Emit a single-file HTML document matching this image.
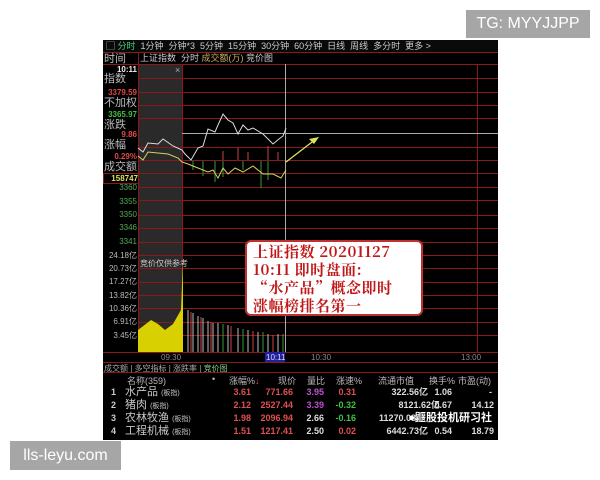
<!DOCTYPE html>
<html><head><meta charset="utf-8"><style>
body{margin:0;width:600px;height:480px;background:#fff;position:relative;overflow:hidden;font-family:"Liberation Sans","Noto Sans CJK SC",sans-serif}
.a{position:absolute;white-space:nowrap}
#p{position:absolute;left:103px;top:40px;width:395px;height:400px;background:#000;overflow:hidden}
.t{font-size:9px;line-height:10px}
.l{font-size:11px;color:#bbb;line-height:12px;left:1px}
.n{font-size:8px;left:0;text-align:right;width:34px;line-height:9px;font-weight:bold}
.c{font-size:11px;color:#c8c8c8}
</style></head><body>
<div class="a" style="left:466px;top:10px;width:124px;height:28px;background:#a6a6a6;color:#fff;font-size:16px;line-height:28px;text-align:center">TG: MYYJJPP</div>
<div class="a" style="left:10px;top:441px;width:111px;height:29px;background:#a6a6a6;color:#fff;font-size:16px;line-height:29px;text-align:center">lls-leyu.com</div>
<div id="p">
<svg width="395" height="400" style="position:absolute;left:0;top:0">
<rect x="0" y="0" width="395" height="12" fill="#0a0a0a"/>
<rect x="35" y="24" width="44" height="288" fill="#2a2a2a"/>
<g stroke="#8a1a1a" stroke-width="1">
<line x1="0" y1="12.5" x2="395" y2="12.5"/><line x1="35.5" y1="12" x2="35.5" y2="312"/><line x1="79.5" y1="24" x2="79.5" y2="312"/>
<line x1="374.5" y1="24" x2="374.5" y2="312"/><line x1="0" y1="24.5" x2="395" y2="24.5"/>
<line x1="35" y1="38.5" x2="395" y2="38.5"/><line x1="35" y1="52.5" x2="395" y2="52.5"/><line x1="35" y1="65.5" x2="395" y2="65.5"/><line x1="35" y1="78.5" x2="395" y2="78.5"/><line x1="35" y1="107.5" x2="395" y2="107.5"/><line x1="35" y1="120.5" x2="395" y2="120.5"/><line x1="35" y1="133.5" x2="395" y2="133.5"/><line x1="35" y1="147.5" x2="395" y2="147.5"/><line x1="35" y1="160.5" x2="395" y2="160.5"/><line x1="35" y1="175.5" x2="395" y2="175.5"/><line x1="35" y1="188.5" x2="395" y2="188.5"/><line x1="35" y1="202.5" x2="395" y2="202.5"/><line x1="35" y1="215.5" x2="395" y2="215.5"/><line x1="35" y1="228.5" x2="395" y2="228.5"/><line x1="35" y1="242.5" x2="395" y2="242.5"/><line x1="35" y1="255.5" x2="395" y2="255.5"/><line x1="35" y1="268.5" x2="395" y2="268.5"/><line x1="35" y1="282.5" x2="395" y2="282.5"/><line x1="35" y1="295.5" x2="395" y2="295.5"/>
<line x1="0" y1="312.5" x2="395" y2="312.5"/><line x1="0" y1="322.5" x2="395" y2="322.5"/><line x1="0" y1="332.5" x2="395" y2="332.5"/>
</g>
<line x1="79" y1="93.5" x2="395" y2="93.5" stroke="#aaa"/>
<line x1="182.5" y1="24" x2="182.5" y2="312" stroke="#aaa"/>
<g stroke="#d04040"><line x1="120" y1="120" x2="120" y2="111"/><line x1="135" y1="120" x2="135" y2="108"/><line x1="145" y1="120" x2="145" y2="112"/><line x1="165" y1="120" x2="165" y2="106"/><line x1="175" y1="120" x2="175" y2="112"/></g>
<g stroke="#3a9a3a"><line x1="90" y1="121" x2="90" y2="130"/><line x1="100" y1="121" x2="100" y2="136"/><line x1="112" y1="121" x2="112" y2="142"/><line x1="120" y1="121" x2="120" y2="137"/><line x1="140" y1="121" x2="140" y2="130"/><line x1="158" y1="121" x2="158" y2="148"/><line x1="165" y1="121" x2="165" y2="140"/></g>
<polyline fill="none" stroke="#ddd" points="35,108 40,112 45,103 55,104 60,99 70,106 79,110 82,114 88,120 95,108 100,106 105,89 112,92 115,85 120,74 125,80 130,83 135,94 140,85 145,90 150,88 160,94 170,104 176,99 180,96 183,88"/>
<polyline fill="none" stroke="#d8d060" points="35,116 40,120 45,112 55,113 65,114 75,118 79,122 85,124 95,128 105,132 110,130 115,138 120,128 125,134 132,128 140,132 150,126 160,134 170,134 178,138 183,130"/>
<line x1="183" y1="122" x2="213" y2="99" stroke="#e0e060" stroke-width="1.3"/>
<polygon points="216,97 206,99 211,104" fill="#e0e060"/>
<polygon fill="#d8d000" points="35,312 35,290 48,280 55,284 62,290 70,284 78,270 80,220 80,312"/>
<g stroke="#bbb" stroke-width="1">
<line x1="85" y1="312" x2="85" y2="270"/><line x1="90" y1="312" x2="90" y2="273"/><line x1="95" y1="312" x2="95" y2="276"/><line x1="100" y1="312" x2="100" y2="278"/><line x1="105" y1="312" x2="105" y2="281"/><line x1="110" y1="312" x2="110" y2="283"/><line x1="115" y1="312" x2="115" y2="283"/><line x1="125" y1="312" x2="125" y2="285"/><line x1="135" y1="312" x2="135" y2="288"/><line x1="145" y1="312" x2="145" y2="290"/><line x1="155" y1="312" x2="155" y2="292"/><line x1="165" y1="312" x2="165" y2="294"/><line x1="175" y1="312" x2="175" y2="294"/>
</g>
<g stroke="#c44" stroke-width="1"><line x1="88" y1="312" x2="88" y2="272"/><line x1="98" y1="312" x2="98" y2="277"/><line x1="108" y1="312" x2="108" y2="282"/><line x1="128" y1="312" x2="128" y2="286"/><line x1="150" y1="312" x2="150" y2="291"/><line x1="170" y1="312" x2="170" y2="295"/></g>
<g stroke="#3a9a3a" stroke-width="1"><line x1="120" y1="312" x2="120" y2="284"/><line x1="140" y1="312" x2="140" y2="289"/><line x1="160" y1="312" x2="160" y2="292"/><line x1="180" y1="312" x2="180" y2="294"/></g>
<rect x="162" y="312" width="20" height="10" fill="#2020a0"/>
</svg>
<div class="a t" style="left:3px;top:1px;color:#ccc">▢ <span style="color:#4c8">分时</span>&nbsp; 1分钟 &nbsp;分钟*3 &nbsp;5分钟 &nbsp;15分钟 &nbsp;30分钟 &nbsp;60分钟 &nbsp;日线 &nbsp;周线 &nbsp;多分时 &nbsp;更多 &gt;</div>
<div class="a t" style="left:37px;top:13px;color:#ccc">上证指数 &nbsp;分时 <span style="color:#c9b060">成交额(万)</span> 竞价图</div>
<div class="a t" style="left:72px;top:25px;color:#aaa">×</div>
<div class="a l" style="top:13px">时间</div>
<div class="a n" style="top:25px;color:#eee">10:11</div>
<div class="a l" style="top:33px">指数</div>
<div class="a n" style="top:48px;color:#e04848">3379.59</div>
<div class="a l" style="top:57px">不加权</div>
<div class="a n" style="top:70px;color:#40c040">3365.97</div>
<div class="a l" style="top:79px">涨跌</div>
<div class="a n" style="top:90px;color:#e04848">9.86</div>
<div class="a l" style="top:99px">涨幅</div>
<div class="a n" style="top:112px;color:#e04848">0.29%</div>
<div class="a l" style="top:121px">成交额</div>
<div class="a n" style="top:133px;color:#e0e060;border:1px solid #8a1a1a">158747</div>
<div class="a n" style="top:143px;color:#5a5;font-weight:normal">3360</div>
<div class="a n" style="top:157px;color:#5a5;font-weight:normal">3355</div>
<div class="a n" style="top:170px;color:#5a5;font-weight:normal">3350</div>
<div class="a n" style="top:183px;color:#5a5;font-weight:normal">3346</div>
<div class="a n" style="top:197px;color:#5a5;font-weight:normal">3341</div>
<div class="a n" style="top:211px;color:#bbb;font-weight:normal">24.18亿</div>
<div class="a n" style="top:224px;color:#bbb;font-weight:normal">20.73亿</div>
<div class="a n" style="top:237px;color:#bbb;font-weight:normal">17.27亿</div>
<div class="a n" style="top:251px;color:#bbb;font-weight:normal">13.82亿</div>
<div class="a n" style="top:264px;color:#bbb;font-weight:normal">10.36亿</div>
<div class="a n" style="top:277px;color:#bbb;font-weight:normal">6.91亿</div>
<div class="a n" style="top:291px;color:#bbb;font-weight:normal">3.45亿</div>
<div class="a" style="left:37px;top:218px;font-size:8px;color:#ccc">竞价仅供参考</div>
<div class="a" style="left:58px;top:313px;font-size:8px;color:#888">09:30</div>
<div class="a" style="left:163px;top:313px;font-size:8px;color:#ddd">10:11</div>
<div class="a" style="left:208px;top:313px;font-size:8px;color:#888">10:30</div>
<div class="a" style="left:358px;top:313px;font-size:8px;color:#888">13:00</div>
<div class="a" style="left:1px;top:323px;font-size:8px;color:#aaa">成交额 | 多空指标 | 涨跌率 | <span style="color:#8c8">竞价图</span></div>
<div class="a" style="top:334px;left:0;width:395px;font-size:9px;color:#bbb;height:12px">
<span class="a" style="left:24px">名称(359)</span><span class="a" style="left:109px">•</span><span class="a" style="left:126px">涨幅%<span style="color:#e44">↓</span></span><span class="a" style="left:175px">现价</span><span class="a" style="left:204px">量比</span><span class="a" style="left:233px">涨速%</span><span class="a" style="left:275px">流通市值</span><span class="a" style="left:326px">换手%</span><span class="a" style="left:355px">市盈(动)</span></div>
<div class="a" style="top:346px;left:0;width:395px;font-size:9px;font-weight:bold;line-height:13px">
<div style="position:relative;height:13px"><span class="a" style="left:8px;color:#ccc">1</span><span class="a c" style="left:22px;font-weight:normal">水产品 <small style="font-size:7px">(板指)</small></span><span class="a" style="right:247px;color:#e05050">3.61</span><span class="a" style="right:205px;color:#e05050">771.66</span><span class="a" style="right:174px;color:#c050d0">3.95</span><span class="a" style="right:142px;color:#e05050">0.31</span><span class="a" style="right:70px;color:#ddd">322.56亿</span><span class="a" style="right:46px;color:#ddd">1.06</span><span class="a" style="right:6px;color:#ddd">-</span></div>
<div style="position:relative;height:13px"><span class="a" style="left:8px;color:#ccc">2</span><span class="a c" style="left:22px;font-weight:normal">猪肉 <small style="font-size:7px">(板指)</small></span><span class="a" style="right:247px;color:#e05050">2.12</span><span class="a" style="right:205px;color:#e05050">2527.44</span><span class="a" style="right:174px;color:#c050d0">3.39</span><span class="a" style="right:142px;color:#40c040">-0.32</span><span class="a" style="right:58px;color:#ddd">8121.62亿</span><span class="a" style="right:46px;color:#ddd">0.67</span><span class="a" style="right:4px;color:#ddd">14.12</span></div>
<div style="position:relative;height:13px"><span class="a" style="left:8px;color:#ccc">3</span><span class="a c" style="left:22px;font-weight:normal">农林牧渔 <small style="font-size:7px">(板指)</small></span><span class="a" style="right:247px;color:#e05050">1.98</span><span class="a" style="right:205px;color:#e05050">2096.94</span><span class="a" style="right:174px;color:#ddd">2.66</span><span class="a" style="right:142px;color:#40c040">-0.16</span><span class="a" style="right:82px;color:#ddd">11270.08</span><span class="a" style="right:6px;color:#fff;font-size:11px">●鼴股投机研习社</span></div>
<div style="position:relative;height:13px"><span class="a" style="left:8px;color:#ccc">4</span><span class="a c" style="left:22px;font-weight:normal">工程机械 <small style="font-size:7px">(板指)</small></span><span class="a" style="right:247px;color:#e05050">1.51</span><span class="a" style="right:205px;color:#e05050">1217.41</span><span class="a" style="right:174px;color:#ddd">2.50</span><span class="a" style="right:142px;color:#e05050">0.02</span><span class="a" style="right:70px;color:#ddd">6442.73亿</span><span class="a" style="right:46px;color:#ddd">0.54</span><span class="a" style="right:4px;color:#ddd">18.79</span></div>
</div>
</div>
<div class="a" style="left:245px;top:240px;width:178px;height:76px;background:#fff;border:2px solid #c03030;border-radius:6px;color:#c01818;font-family:'Noto Serif CJK SC','Liberation Serif',serif;font-weight:bold;font-size:15px;line-height:18px;padding:1px 0 0 6px;box-sizing:border-box;letter-spacing:0.5px">上证指数 20201127<br>10:11 即时盘面:<br>“水产品”概念即时<br>涨幅榜排名第一</div>
</body></html>
